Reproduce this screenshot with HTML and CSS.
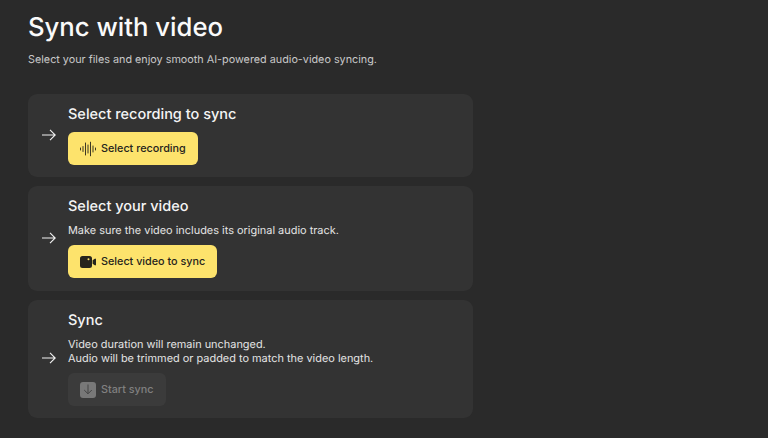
FILE: index.html
```html
<!DOCTYPE html>
<html lang="en">
<head>
<meta charset="utf-8">
<title>Sync with video</title>
<link rel="stylesheet" href="styles.css">
</head>
<body>
<main class="page">
  <h1 class="title">Sync with video</h1>
  <p class="subtitle">Select your files and enjoy smooth AI-powered audio-video syncing.</p>
  <div class="steps">
    <section class="step step-one">
      <svg class="arrow" width="14" height="12" viewBox="0 0 14 12" fill="none"><path d="M0 6h13M8 .8 13.2 6 8 11.2" stroke="#f2f2f2" stroke-width="1.1"/></svg>
      <div class="body">
        <h2 class="heading">Select recording to sync</h2>
        <button class="btn btn-first">
          <svg class="icon" width="16" height="16" viewBox="0 0 16 16" fill="none" stroke="#26241c" stroke-width=".9" stroke-linecap="round"><path d="M.5 7v2M3 5.5v5M5.5 2v12M8 4v8M10.5 1.2v13.6M13 5v6M15.5 7v2"/></svg>
          Select recording
        </button>
      </div>
    </section>
    <section class="step step-two">
      <svg class="arrow" width="14" height="12" viewBox="0 0 14 12" fill="none"><path d="M0 6h13M8 .8 13.2 6 8 11.2" stroke="#f2f2f2" stroke-width="1.1"/></svg>
      <div class="body">
        <h2 class="heading">Select your video</h2>
        <p class="text">Make sure the video includes its original audio track.</p>
        <button class="btn">
          <svg class="icon" width="16" height="14" viewBox="0 0 16 14"><path fill="#26241c" fill-rule="evenodd" d="M2.5 1h7A2.5 2.5 0 0 1 12 3.500v7A2.500 2.500 0 0 1 9.500 13h-7A2.500 2.500 0 0 1 0 10.500v-7A2.500 2.500 0 0 1 2.500 1ZM8.500 3.300a1 1 0 1 0 0 2 1 1 0 0 0 0-2Z"/><path fill="#26241c" d="m12.600 5.200 2.200-1.500a.8.800 0 0 1 1.200.7v5.200a.8.800 0 0 1-1.200.7l-2.200-1.500Z"/></svg>
          Select video to sync
        </button>
      </div>
    </section>
    <section class="step step-three">
      <svg class="arrow" width="14" height="12" viewBox="0 0 14 12" fill="none"><path d="M0 6h13M8 .8 13.2 6 8 11.2" stroke="#f2f2f2" stroke-width="1.1"/></svg>
      <div class="body">
        <h2 class="heading">Sync</h2>
        <p class="text">Video duration will remain unchanged.<br>Audio will be trimmed or padded to match the video length.</p>
        <button class="btn btn-disabled" disabled>
          <span class="badge"><svg width="10" height="11" viewBox="0 0 10 11" fill="none" stroke="#444" stroke-width="1"><path d="M5 .5v9M1.200 6 5 9.800 8.800 6"/></svg></span>
          Start sync
        </button>
      </div>
    </section>
  </div>
</main>
</body>
</html>
```
FILE: styles.css
```css
* { box-sizing: border-box; }
html, body { margin: 0; height: 100%; }
body {
  background: #2a2a2a;
  color: #fff;
  font-family: Inter, "Liberation Sans", sans-serif;
  text-rendering: geometricPrecision;
  overflow: hidden;
}
.page { padding: 11px 0 0 28px; width: 473px; }
.title {
  margin: 0;
  font-size: 25.7px;
  line-height: 34px;
  font-weight: 500;
  color: #fafafa;
}
.subtitle {
  margin: 7px 0 0;
  font-size: 10.8px;
  line-height: 16px;
  color: #c8c8c8;
}
.steps { display: flex; flex-direction: column; gap: 9px; margin-top: 26px; }
.step {
  display: flex;
  align-items: center;
  gap: 12px;
  padding-left: 14px;
  background: #333333;
  border-radius: 9px;
}
.step-one { height: 83px; }
.step-two { height: 105px; }
.step-three { height: 118px; }
.arrow { flex: none; margin-bottom: 2px; }
.body {
  display: flex;
  flex-direction: column;
  align-items: flex-start;
  align-self: flex-start;
  padding-top: 11px;
}
.heading {
  margin: 0;
  font-size: 14.5px;
  line-height: 20px;
  font-weight: 500;
  color: #f5f5f5;
}
.text {
  margin: 6px 0 8px;
  font-size: 10.93px;
  line-height: 14px;
  color: #e4e4e4;
}
.btn {
  display: flex;
  align-items: center;
  gap: 5px;
  height: 33px;
  padding: 0 12px;
  border: 0;
  border-radius: 6px;
  background: #fde36c;
  color: #26241c;
  font: 500 10.8px/16px Inter, "Liberation Sans", sans-serif;
}
.btn-first { margin-top: 7px; }
.btn-disabled { background: #3b3b3b; color: #808080; }
.badge {
  display: flex;
  align-items: center;
  justify-content: center;
  width: 16px;
  height: 16px;
  border-radius: 3px;
  background: #787878;
}
```
